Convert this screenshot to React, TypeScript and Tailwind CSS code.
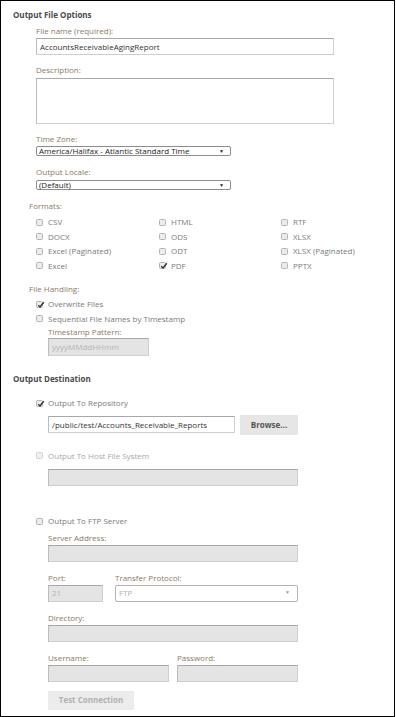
import React from "react";

const Check = ({checked = false, disabled = false}: { checked?: boolean; disabled?: boolean }) => (
    <span
        className={
            "relative inline-flex items-center justify-center w-[7px] h-[7px] rounded-[1.5px] border shrink-0 " +
            (disabled ? "border-[#d4d4d4] bg-[#f0f0f0]" : "border-[#b4b4b4] bg-[#ececec]")
        }
    >
        {checked && (
            <svg viewBox="0 0 8 8" className="absolute w-[8px] h-[8px] -top-[1px] left-[0px]">
                <path d="M1.2 4.2 L3 6 L6.8 1.2" fill="none" stroke="#333" strokeWidth="1.4"/>
            </svg>
        )}
    </span>
);

const CheckRow = ({label, checked, disabled, className = ""}: {
    label: string;
    checked?: boolean;
    disabled?: boolean;
    className?: string
}) => (
    <div className={"flex items-center h-[14.5px] gap-[5px] " + className}>
        <Check checked={checked} disabled={disabled}/>
        <span className={disabled ? "text-[#a8a8a8]" : "text-[#7a7a7a]"}>{label}</span>
    </div>
);

const Label = ({children, className = ""}: { children: React.ReactNode; className?: string }) => (
    <div className={"leading-[10px] text-[#8a7a66] " + className}>{children}</div>
);

const Field = ({className = "", value = "", disabled = false}: {
    className?: string;
    value?: string;
    disabled?: boolean
}) => (
    <div
        className={
            "h-[17px] flex items-center px-[3px] border border-[#cfcfcf] border-t-[#a8a8a8] border-l-[#bcbcbc] " +
            (disabled ? "bg-[#e4e4e4] text-[#b4b4b4]" : "bg-white text-[#333]") +
            " " + className
        }
    >
        {value}
    </div>
);

const formats: [string, boolean][] = [
    ["CSV", false], ["HTML", false], ["RTF", false],
    ["DOCX", false], ["ODS", false], ["XLSX", false],
    ["Excel (Paginated)", false], ["ODT", false], ["XLSX (Paginated)", false],
    ["Excel", false], ["PDF", true], ["PPTX", false],
];

export default function App() {
    return (
        <div
            className="w-[395px] h-[717px] border border-black bg-white text-[8px] text-[#555] flex flex-col"
            style={{fontFamily: "'Open Sans', 'Liberation Sans', sans-serif"}}
        >
            {/* Output File Options */}
            <div className="pt-[9px] pl-[12px] leading-[10px] font-bold text-[#4a4a4a]">Output File Options</div>

            <div className="pl-[35px] flex flex-col">
                <Label className="mt-[6px]">File name (required):</Label>
                <Field className="mt-[2px] w-[298px]" value="AccountsReceivableAgingReport"/>

                <Label className="mt-[10px]">Description:</Label>
                <div
                    className="mt-[3px] w-[298px] h-[46px] border border-[#cfcfcf] border-t-[#a8a8a8] border-l-[#bcbcbc] bg-white"/>

                <Label className="mt-[10px]">Time Zone:</Label>
                <div
                    className="mt-[2px] w-[195px] h-[10px] flex items-center justify-between pl-[2px] pr-[6px] border border-[#8c8c8c] rounded-[2px] text-[#222] leading-none">
                    <span>America/Halifax - Atlantic Standard Time</span>
                    <span className="text-[5px]">▼</span>
                </div>

                <Label className="mt-[11px]">Output Locale:</Label>
                <div
                    className="mt-[3px] w-[195px] h-[10px] flex items-center justify-between pl-[2px] pr-[6px] border border-[#8c8c8c] rounded-[2px] text-[#222] leading-none">
                    <span>(Default)</span>
                    <span className="text-[5px]">▼</span>
                </div>
            </div>

            <Label className="mt-[11px] ml-[28px]">Formats:</Label>
            <div className="mt-[4px] ml-[35px] grid grid-cols-[123px_122px_1fr]">
                {formats.map(([f, c]) => (
                    <CheckRow key={f} label={f} checked={c}/>
                ))}
            </div>

            <Label className="mt-[11px] ml-[28px]">File Handling:</Label>
            <div className="mt-[3px] ml-[35px] flex flex-col">
                <CheckRow label="Overwrite Files" checked/>
                <CheckRow label="Sequential File Names by Timestamp"/>
            </div>
            <Label className="mt-[1px] ml-[47px] text-[#7a7a7a]">Timestamp Pattern:</Label>
            <Field className="mt-[1px] ml-[47px] w-[101px] h-[18px]" value="yyyyMMddHHmm" disabled/>

            {/* Output Destination */}
            <div className="mt-[18px] pl-[12px] leading-[10px] font-bold text-[#4a4a4a]">Output Destination</div>

            <div className="ml-[35px] mt-[12px] flex flex-col">
                <CheckRow label="Output To Repository" checked/>
                <div className="mt-[4px] ml-[12px] flex items-center gap-[5px]">
                    <Field className="w-[187px]" value="/public/test/Accounts_Receivable_Reports"/>
                    <div
                        className="w-[58px] h-[20px] bg-[#e6e6e6] flex items-center justify-center font-bold text-[#555]">
                        Browse...
                    </div>
                </div>

                <CheckRow className="mt-[14px]" label="Output To Host File System" disabled/>
                <Field className="mt-[6px] ml-[12px] w-[250px]" disabled/>

                <CheckRow className="mt-[28px]" label="Output To FTP Server"/>
                <div className="ml-[12px] flex flex-col">
                    <Label className="mt-[4px]">Server Address:</Label>
                    <Field className="mt-[2px] w-[250px]" disabled/>

                    <div className="mt-[11px] flex gap-[12px]">
                        <div className="flex flex-col">
                            <Label>Port:</Label>
                            <Field className="mt-[2px] w-[55px]" value="21" disabled/>
                        </div>
                        <div className="flex flex-col">
                            <Label>Transfer Protocol:</Label>
                            <div
                                className="mt-[2px] w-[183px] h-[17px] flex items-center justify-between pl-[3px] pr-[7px] border border-[#b4b4b4] rounded-[2px] bg-white text-[#b0b0b0]">
                                <span>FTP</span>
                                <span className="text-[5px] text-[#999]">▼</span>
                            </div>
                        </div>
                    </div>

                    <Label className="mt-[11px]">Directory:</Label>
                    <Field className="mt-[2px] w-[250px]" disabled/>

                    <div className="mt-[11px] flex gap-[8px]">
                        <div className="flex flex-col">
                            <Label>Username:</Label>
                            <Field className="mt-[2px] w-[121px]" disabled/>
                        </div>
                        <div className="flex flex-col">
                            <Label>Password:</Label>
                            <Field className="mt-[2px] w-[121px]" disabled/>
                        </div>
                    </div>

                    <div
                        className="mt-[9px] w-[86px] h-[19px] bg-[#ececec] flex items-center justify-center font-bold text-[#b0b0b0]">
                        Test Connection
                    </div>
                </div>
            </div>
        </div>
    );
}
